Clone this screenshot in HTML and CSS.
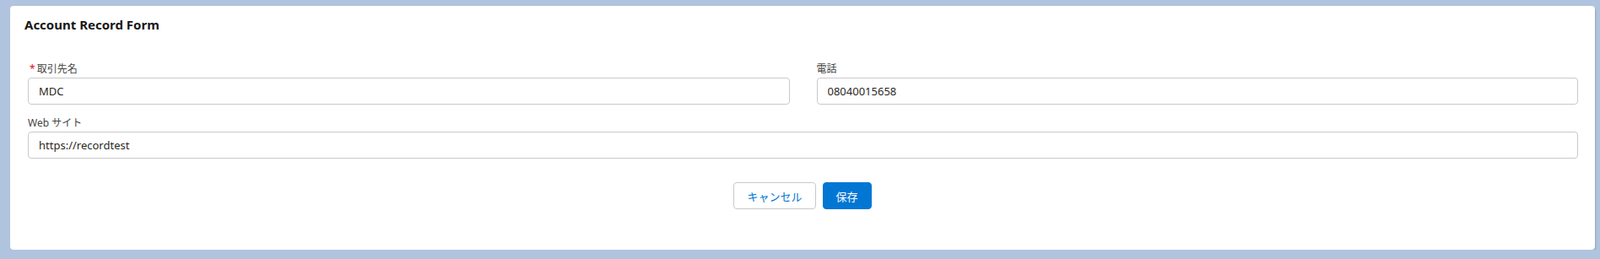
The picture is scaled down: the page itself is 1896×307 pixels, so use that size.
FILE: index.html
```html
<!DOCTYPE html>
<html lang="ja">
<head>
  <meta charset="UTF-8" />
  <meta name="viewport" content="width=device-width, initial-scale=1" />
  <title>Account Record Form</title>
  <link rel="stylesheet" href="styles.css">
</head>
<body>
  <div class="card">
    <h2 class="card-title">Account Record Form</h2>

    <form class="record-form">
      <div class="field">
        <label for="name"><abbr class="required" title="必須">*</abbr>取引先名</label>
        <input type="text" id="name" value="MDC" />
      </div>

      <div class="field">
        <label for="phone">電話</label>
        <input type="text" id="phone" value="08040015658" />
      </div>

      <div class="field field-wide">
        <label for="website">Web サイト</label>
        <input type="text" id="website" value="https://recordtest" />
      </div>

      <div class="actions">
        <button type="button" class="btn btn-neutral">キャンセル</button>
        <button type="submit" class="btn btn-brand">保存</button>
      </div>
    </form>
  </div>
</body>
</html>
```

FILE: styles.css
```css
body {
  margin: 0;
  padding: 7px 6px 0 12px;
  background: #b0c4df;
  font-family: "Noto Sans", "Noto Sans CJK JP", sans-serif;
  color: #181818;
}

.card {
  background: #fff;
  border-radius: 4px;
  box-shadow: 1px 2px 2px rgba(0, 0, 0, 0.15);
  height: 289px;
  box-sizing: border-box;
  padding: 12px 20px 0 21px;
}

.card-title {
  margin: 0 0 0 -4px;
  font-size: 15px;
  line-height: 20px;
  font-weight: 700;
}

.record-form {
  display: grid;
  grid-template-columns: 1fr 1fr;
  column-gap: 32px;
  row-gap: 13px;
  margin-top: 34px;
}

.field label {
  display: block;
  font-size: 12px;
  line-height: 18px;
  color: #444;
  margin-bottom: 1px;
}

.required {
  color: #ea001e;
  text-decoration: none;
  margin: 0 2px;
}

.field input {
  display: block;
  width: 100%;
  box-sizing: border-box;
  height: 32px;
  padding: 0 12px;
  border: 1px solid #c9c9c9;
  border-radius: 4px;
  font-family: inherit;
  font-size: 13px;
  color: #2b2826;
}

.field-wide {
  grid-column: 1 / -1;
}

.actions {
  grid-column: 1 / -1;
  display: flex;
  justify-content: center;
  gap: 8px;
  margin-top: 15px;
  margin-right: 1px;
}

.btn {
  height: 32px;
  padding: 0 15px;
  border-radius: 4px;
  font-family: inherit;
  font-size: 13px;
  cursor: pointer;
}

.btn-neutral {
  background: #fff;
  border: 1px solid #c9c9c9;
  color: #0176d3;
}

.btn-brand {
  background: #0176d3;
  border: 1px solid #0176d3;
  color: #fff;
}
```
